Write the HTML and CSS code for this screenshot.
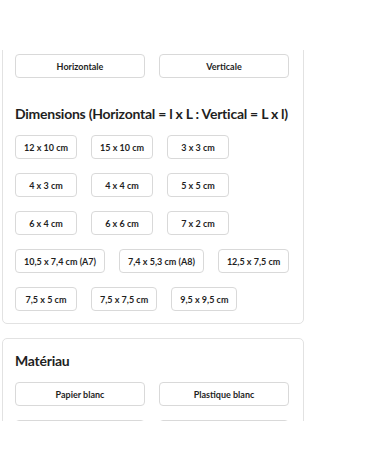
FILE: index.html
```html
<!DOCTYPE html>
<html lang="fr">
<head>
    <meta charset="UTF-8">
    <meta name="viewport" content="width=device-width, initial-scale=1.0">
    <title>Options d'impression</title>
    <link rel="stylesheet" href="styles.css">
</head>
<body>

<div class="frame">
    <div class="scroll">
        <section class="card">
            <h2 class="card-title">Orientation</h2>
            <div class="choice-grid">
                <button class="choice">Horizontale</button>
                <button class="choice">Verticale</button>
            </div>

            <h2 class="card-title section-gap">Dimensions (Horizontal = l x L : Vertical = L x l)</h2>
            <div class="chip-list">
                <div class="chip-row">
                    <button class="chip">12 x 10 cm</button>
                    <button class="chip">15 x 10 cm</button>
                    <button class="chip">3 x 3 cm</button>
                </div>
                <div class="chip-row">
                    <button class="chip">4 x 3 cm</button>
                    <button class="chip">4 x 4 cm</button>
                    <button class="chip">5 x 5 cm</button>
                </div>
                <div class="chip-row">
                    <button class="chip">6 x 4 cm</button>
                    <button class="chip">6 x 6 cm</button>
                    <button class="chip">7 x 2 cm</button>
                </div>
                <div class="chip-row">
                    <button class="chip">10,5 x 7,4 cm (A7)</button>
                    <button class="chip">7,4 x 5,3 cm (A8)</button>
                    <button class="chip">12,5 x 7,5 cm</button>
                </div>
                <div class="chip-row">
                    <button class="chip">7,5 x 5 cm</button>
                    <button class="chip">7,5 x 7,5 cm</button>
                    <button class="chip">9,5 x 9,5 cm</button>
                </div>
            </div>
        </section>

        <section class="card">
            <h2 class="card-title">Matériau</h2>
            <div class="choice-grid">
                <button class="choice">Papier blanc</button>
                <button class="choice">Plastique blanc</button>
                <button class="choice">Papier kraft</button>
                <button class="choice">Plastique transparent</button>
            </div>
        </section>
    </div>
</div>

</body>
</html>
```

FILE: styles.css
```css
body {
    font-family: "Lato", "Liberation Sans", sans-serif;
    background-color: white;
    color: #1f1f1f;
    margin: 0;
    padding: 0;
}

.frame {
    margin-top: 50px;
    height: 371px;
    overflow: hidden;
    padding-left: 2px;
}

.scroll {
    margin-top: -40px;
    width: 302px;
}

.card {
    border: 1px solid #e2e2e2;
    border-radius: 5px;
    padding: 13px 13px 12px 12px;
    margin-bottom: 14px;
}

.card-title {
    font-size: 14px;
    font-weight: 700;
    line-height: 18px;
    letter-spacing: -0.25px;
    margin: 0 0 12px 0;
    white-space: nowrap;
}

.card-title.section-gap {
    margin-top: 27px;
}

.choice-grid {
    display: grid;
    grid-template-columns: 130px 130px;
    gap: 14px;
}

.choice, .chip {
    font-family: inherit;
    font-size: 9px;
    font-weight: 700;
    color: #1f1f1f;
    background-color: white;
    border: 1px solid #d9d9d9;
    border-radius: 4px;
    height: 24px;
    padding: 0;
    cursor: pointer;
}

.chip-list {
    display: flex;
    flex-direction: column;
    gap: 14px;
}

.chip-row {
    display: flex;
    gap: 14px;
}

.chip {
    flex: none;
    white-space: nowrap;
    min-width: 62px;
    padding: 0 8px;
}
```
